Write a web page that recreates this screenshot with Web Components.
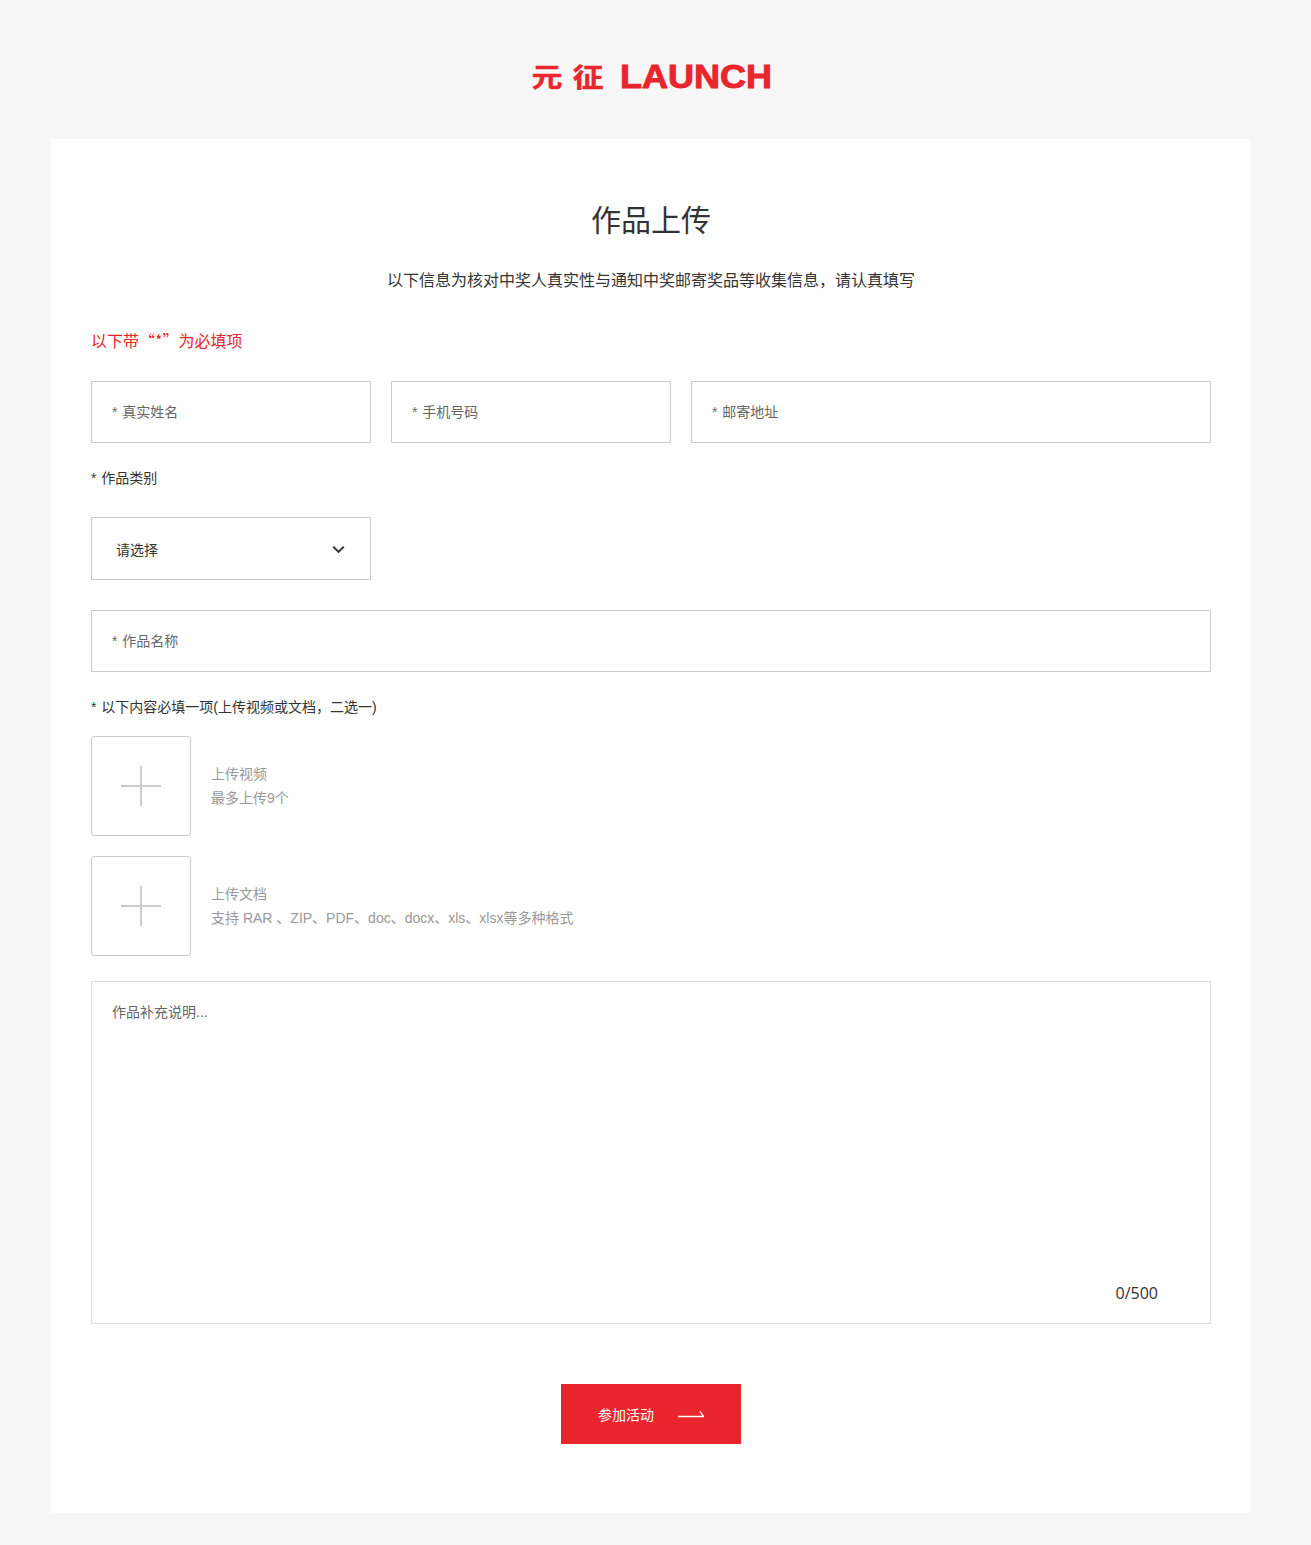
<!DOCTYPE html>
<html lang="zh-CN"><head><meta charset="utf-8"><title>作品上传</title>
<style>
html,body{margin:0;padding:0;background:#f7f7f7;}
body{font-family:"Liberation Sans","Noto Sans CJK SC",sans-serif;color:#333;}
</style></head><body>
<upload-page>
  <brand-logo slot="logo"></brand-logo>
  <h-row>
    <text-field style="flex:0 0 280px">* 真实姓名</text-field>
    <text-field style="flex:0 0 280px">* 手机号码</text-field>
    <text-field style="flex:1 1 0">* 邮寄地址</text-field>
  </h-row>
  <form-label style="margin-top:25px">* 作品类别</form-label>
  <select-box style="margin-top:29px">请选择</select-box>
  <text-field style="margin-top:30px">* 作品名称</text-field>
  <form-label style="margin-top:25px">* 以下内容必填一项(上传视频或文档，二选一)</form-label>
  <upload-item style="margin-top:19px"><span slot="title">上传视频</span><span slot="hint">最多上传9个</span></upload-item>
  <upload-item style="margin-top:20px"><span slot="title">上传文档</span><span slot="hint">支持 RAR 、ZIP、PDF、doc、docx、xls、xlsx等多种格式</span></upload-item>
  <memo-box style="margin-top:25px" count="0/500">作品补充说明...</memo-box>
  <submit-button style="margin-top:60px">参加活动</submit-button>
</upload-page>
<script>
function def(name, html){
  customElements.define(name, class extends HTMLElement{
    constructor(){super();this.attachShadow({mode:'open'}).innerHTML=html;}
    connectedCallback(){
      const c=this.shadowRoot.querySelector('[data-count]');
      if(c) c.textContent=this.getAttribute('count')||'';
    }
  });
}
def('upload-page',`<style>
:host{display:block;}
header{box-sizing:border-box;width:1200px;margin-left:51px;height:139px;padding-top:13px;display:flex;align-items:center;justify-content:center;}
main{box-sizing:border-box;width:1200px;margin:0 0 32px 51px;background:#fff;padding:40px 40px 69px;height:1374px;}
h1{margin:0;font-size:30px;font-weight:400;line-height:44px;text-align:center;color:#333;padding-top:20px;}
.sub{margin:26px 0 0;font-size:16px;line-height:24px;text-align:center;color:#333;}
.req{margin:35px 0 0;font-family:"Noto Sans CJK SC",sans-serif;font-size:16px;line-height:24px;color:#e9252d;}
.body{margin-top:29px;display:flex;flex-direction:column;}
</style>
<header><slot name="logo"></slot></header>
<main>
<h1>作品上传</h1>
<p class="sub">以下信息为核对中奖人真实性与通知中奖邮寄奖品等收集信息，请认真填写</p>
<p class="req">以下带“*”为必填项</p>
<div class="body"><slot></slot></div>
</main>`);
def('brand-logo',`<style>
:host{display:flex;align-items:center;color:#e9252d;font-weight:700;height:40px;}
span{line-height:1;display:block;}
.cn{font-family:"Noto Sans CJK SC",sans-serif;font-size:31px;width:31px;font-weight:700;transform:translateY(-1px) scale(1,.86);-webkit-text-stroke:.4px #e9252d;}
.a{margin-right:10px;}.b{margin-right:16px;}
.en{font-family:"Liberation Sans",Arial,sans-serif;font-size:34px;width:151px;white-space:nowrap;transform:scaleX(1.06);transform-origin:left center;-webkit-text-stroke:1px #e9252d;}
</style><span class="cn a">元</span><span class="cn b">征</span><span class="en">LAUNCH</span>`);
def('h-row',`<style>:host{display:flex;gap:20px;}</style><slot></slot>`);
def('text-field',`<style>
:host{display:flex;align-items:center;box-sizing:border-box;height:62px;border:1px solid #ccc;padding:0 20px 2px;font-size:14px;word-spacing:1px;color:#666;background:#fff;}
</style><slot></slot>`);
def('form-label',`<style>:host{display:block;font-size:14px;line-height:20px;word-spacing:1px;color:#333;}</style><slot></slot>`);
def('select-box',`<style>
:host{display:flex;align-items:center;justify-content:space-between;box-sizing:border-box;width:280px;height:63px;border:1px solid #ccc;padding:0 25px 0 24px;font-size:14px;color:#333;}
svg{display:block;margin-top:2px;}
</style><slot></slot><svg width="13" height="9" viewBox="0 0 13 9" fill="none"><path d="M1.2 1.6 6.5 6.9 11.8 1.6" stroke="#333" stroke-width="2"/></svg>`);
def('upload-item',`<style>
:host{display:flex;align-items:center;gap:20px;}
.box{box-sizing:border-box;width:100px;height:100px;border:1px solid #ccc;border-radius:3px;display:flex;align-items:center;justify-content:center;flex:none;}
.t{display:flex;flex-direction:column;font-size:14px;line-height:24px;color:#999;}
svg{display:block;}
</style><div class="box"><svg width="40" height="40" viewBox="0 0 40 40"><path d="M0 20h40M20 0v40" stroke="#ccc" stroke-width="2"/></svg></div>
<div class="t"><slot name="title"></slot><slot name="hint"></slot></div>`);
def('memo-box',`<style>
:host{display:block;position:relative;box-sizing:border-box;height:343px;border:1px solid #ddd;padding:20px;font-size:14px;line-height:20px;color:#666;}
.c{position:absolute;right:52px;bottom:20px;font-family:"Open Sans",sans-serif;font-size:16px;line-height:20px;color:#333;}
</style><slot></slot><span class="c" data-count></span>`);
def('submit-button',`<style>
:host{display:flex;align-items:center;box-sizing:border-box;align-self:center;width:180px;height:60px;background:#e9252d;color:#fff;font-size:14px;padding-left:37px;gap:24px;}
svg{display:block;}
</style><slot></slot><svg width="26" height="8" viewBox="0 0 26 8" fill="none"><path d="M0 6.5H25.5L22 1.5" stroke="#fff" stroke-width="1.3"/></svg>`);
</script>
</body></html>
